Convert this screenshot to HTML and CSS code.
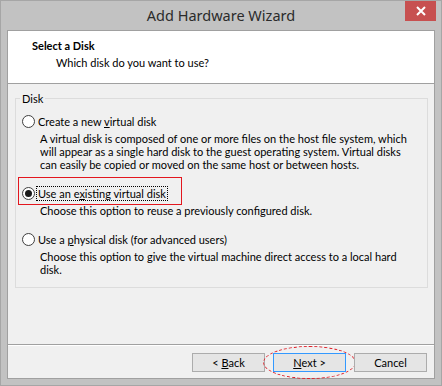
FILE: index.html
```html
<!DOCTYPE html>
<html lang="en">
<head>
    <meta charset="UTF-8">
    <title>Add Hardware Wizard</title>
    <link rel="stylesheet" href="styles.css">
</head>
<body>
    <div class="window">
        <div class="titlebar">
            <span></span>
            <span class="title">Add Hardware Wizard</span>
            <button class="close" aria-label="Close">
                <svg width="10" height="10" viewBox="0 0 10 10">
                    <path d="M1 1 L9 9 M9 1 L1 9" stroke="#fff" stroke-width="2"/>
                </svg>
            </button>
        </div>

        <div class="client">
            <div class="header">
                <div class="header-title">Select a Disk</div>
                <div class="header-sub">Which disk do you want to use?</div>
            </div>

            <div class="content">
                <fieldset class="group">
                    <legend>Disk</legend>

                    <div class="option">
                        <div class="option-row">
                            <span class="radio"></span>
                            <span class="option-label">Create a new <u>v</u>irtual disk</span>
                        </div>
                        <p class="option-desc">A virtual disk is composed of one or more files on the host file system, which<br>will appear as a single hard disk to the guest operating system. Virtual disks<br>can easily be copied or moved on the same host or between hosts.</p>
                    </div>

                    <div class="option">
                        <div class="option-row">
                            <span class="highlight-box"></span>
                            <span class="radio checked"></span>
                            <span class="option-label focused">Use an e<u>x</u>isting virtual disk</span>
                        </div>
                        <p class="option-desc">Choose this option to reuse a previously configured disk.</p>
                    </div>

                    <div class="option">
                        <div class="option-row">
                            <span class="radio"></span>
                            <span class="option-label">Use a <u>p</u>hysical disk (for advanced users)</span>
                        </div>
                        <p class="option-desc">Choose this option to give the virtual machine direct access to a local hard<br>disk.</p>
                    </div>
                </fieldset>
            </div>

            <div class="footer">
                <button class="btn">&lt; <u>B</u>ack</button>
                <button class="btn btn-default">
                    <u>N</u>ext &gt;
                    <span class="highlight-ellipse"></span>
                </button>
                <button class="btn">Cancel</button>
            </div>
        </div>
    </div>
</body>
</html>
```

FILE: styles.css
```css
body {
    margin: 0;
    font-family: Lato, 'Noto Sans', sans-serif;
    font-size: 11px;
    color: #000;
}
.window {
    width: 442px;
    height: 386px;
    box-sizing: border-box;
    background: #c2c2c2;
    border: 1px solid #a6a6a6;
    display: flex;
    flex-direction: column;
}
.titlebar {
    height: 29px;
    display: grid;
    grid-template-columns: 1fr auto 1fr;
}
.title {
    font-family: 'Noto Sans', sans-serif;
    font-size: 14.5px;
    color: #2b2b2b;
    line-height: 29px;
}
.close {
    justify-self: end;
    align-self: start;
    margin-right: 5px;
    width: 31px;
    height: 20px;
    border: none;
    padding: 0;
    background: #c75050;
    display: flex;
    align-items: center;
    justify-content: center;
}
.client {
    margin: 0 6px 6px;
    flex: 1;
    background: #f0f0f0;
    border: 1px solid #a0a0a0;
    display: flex;
    flex-direction: column;
}
.header {
    background: #fff;
    border-bottom: 1px solid #a0a0a0;
    box-sizing: border-box;
    height: 53px;
    padding: 7px 0 0 24px;
}
.header-title {
    font-weight: bold;
    line-height: 15px;
}
.header-sub {
    padding: 2px 0 0 24px;
    line-height: 15px;
}
.content {
    flex: 1;
    padding: 8px 6px 0 7px;
}
.group {
    margin: 0;
    min-width: 0;
    border: 1px solid #dcdcdc;
    padding: 10px 6px 10px 6px;
    height: 196px;
    box-sizing: border-box;
}
.group legend {
    padding: 0 2px;
    margin-left: -2px;
    line-height: 13px;
}
.option {
    margin-bottom: 16px;
}
.option:last-child {
    margin-bottom: 0;
}
.option-row {
    position: relative;
    display: flex;
    align-items: center;
    height: 13px;
    gap: 2px;
}
.radio {
    width: 13px;
    height: 13px;
    box-sizing: border-box;
    border: 1px solid #3f3f3f;
    border-radius: 50%;
    background: #fff;
    display: flex;
    align-items: center;
    justify-content: center;
}
.radio.checked::after {
    content: "";
    width: 7px;
    height: 7px;
    border-radius: 50%;
    background: #1a1a1a;
}
.option-label {
    line-height: 13px;
    padding: 0 1px;
}
.focused {
    outline: 1px dotted #000;
    outline-offset: 0;
}
.option-desc {
    margin: 4px 0 0 18px;
    line-height: 13px;
    white-space: nowrap;
}
.highlight-box {
    position: absolute;
    left: -4px;
    top: -10px;
    width: 164px;
    height: 28px;
    box-sizing: border-box;
    border: 1px solid #e3161e;
}
.footer {
    height: 34px;
    box-sizing: border-box;
    border-top: 1px solid #a0a0a0;
    box-shadow: inset 0 1px #fff;
    padding: 8px 7px 0 0;
    display: flex;
    justify-content: flex-end;
    align-items: flex-start;
    gap: 8px;
}
.btn {
    position: relative;
    width: 73px;
    height: 19px;
    padding: 0;
    font-family: inherit;
    font-size: 11px;
    color: #000;
    background: #e5e5e5;
    border: 1px solid #acacac;
    border-radius: 0;
}
.btn-default {
    border-color: #3399ff;
}
.highlight-ellipse {
    position: absolute;
    left: -11px;
    top: -8px;
    width: 93px;
    height: 33px;
    box-sizing: border-box;
    border: 1px dashed #e0202a;
    border-radius: 50%;
}
```
